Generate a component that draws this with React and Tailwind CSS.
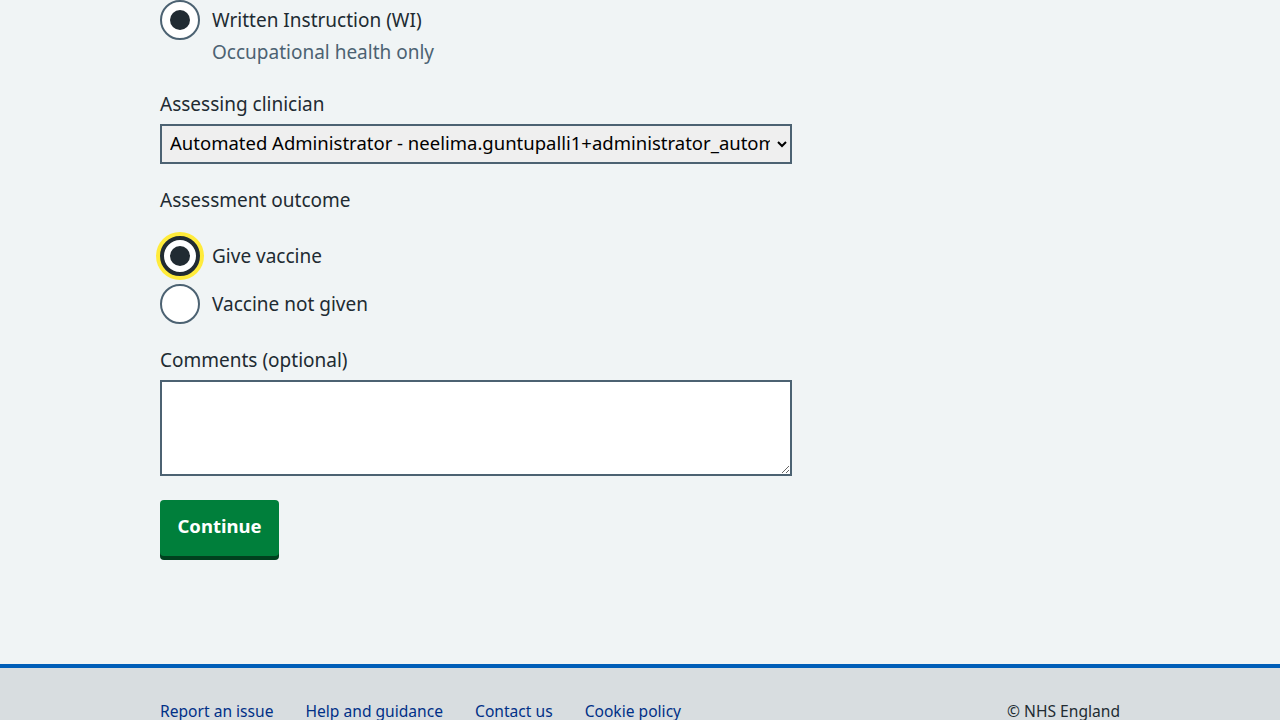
import React from "react";

function Radio({ checked, focused, label }) {
  return (
    <div className="flex items-center h-10">
      <div
        className={
          "w-10 h-10 rounded-full bg-white flex items-center justify-center shrink-0 " +
          (focused
            ? "border-4 border-[#212b32] shadow-[0_0_0_4px_#ffeb3b]"
            : "border-2 border-[#4c6272]")
        }
      >
        {checked && <div className="w-5 h-5 rounded-full bg-[#212b32]" />}
      </div>
      <span className="ml-3 text-[19px] leading-7 text-[#212b32]">{label}</span>
    </div>
  );
}

export default function App() {
  return (
    <div
      className="min-h-[720px] bg-[#f0f4f5] flex flex-col"
      style={{ fontFamily: '"Noto Sans", "Open Sans", sans-serif' }}
    >
      <main className="w-[960px] mx-auto flex flex-col h-[664px]">
        <Radio checked label="Written Instruction (WI)" />
        <div className="pl-[52px] text-[19px] leading-6 text-[#4c6272]">
          Occupational health only
        </div>

        <label className="mt-[26px] text-[19px] leading-7 text-[#212b32]">
          Assessing clinician
        </label>
        <select
          className="mt-[6px] w-[632px] h-10 border-2 border-[#4c6272] bg-[#efefef] text-black text-[18.5px] pl-1 pr-1 pb-[3px]"
          style={{ fontFamily: '"Noto Sans", sans-serif' }}
          defaultValue="a"
        >
          <option value="a">
            Automated Administrator - neelima.guntupalli1+administrator_automation@nhs.net
          </option>
        </select>

        <div className="mt-[22px] text-[19px] leading-7 text-[#212b32]">
          Assessment outcome
        </div>
        <div className="mt-[22px] flex flex-col gap-2">
          <Radio checked focused label="Give vaccine" />
          <Radio label="Vaccine not given" />
        </div>

        <label className="mt-[22px] text-[19px] leading-7 text-[#212b32]">
          Comments (optional)
        </label>
        <textarea
          className="mt-[6px] w-[632px] h-[96px] border-2 border-[#4c6272] bg-white"
          rows={3}
        />

        <div className="mt-6">
          <button className="h-14 w-[119px] pb-1 rounded bg-[#007f3b] text-white font-bold text-[18.5px] shadow-[0_4px_0_#00401e]">
            Continue
          </button>
        </div>
      </main>

      <footer className="border-t-4 border-[#005eb8] bg-[#d8dde0] flex-1">
        <div className="w-[960px] mx-auto pt-[31px] flex justify-between text-[15.6px] leading-6">
          <div className="flex gap-8 text-[#003087]">
            <a href="#">Report an issue</a>
            <a href="#">Help and guidance</a>
            <a href="#">Contact us</a>
            <a href="#">Cookie policy</a>
          </div>
          <div className="text-[#212b32]">© NHS England</div>
        </div>
      </footer>
    </div>
  );
}
